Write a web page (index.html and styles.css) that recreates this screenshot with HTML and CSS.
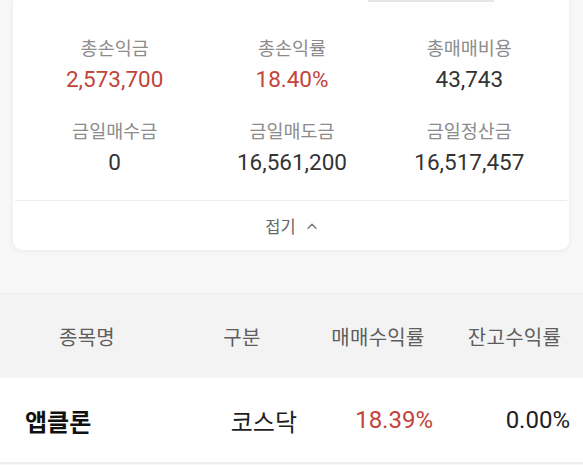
FILE: index.html
```html
<!DOCTYPE html>
<html lang="ko">
<head>
<meta charset="utf-8">
<link rel="stylesheet" href="styles.css">
</head>
<body>
<div class="wrap">
  <div class="card">
    <div class="tabline"></div>
    <div class="stats">
      <div class="stat"><span class="label">총손익금</span><span class="value red">2,573,700</span></div>
      <div class="stat"><span class="label">총손익률</span><span class="value red">18.40%</span></div>
      <div class="stat"><span class="label">총매매비용</span><span class="value">43,743</span></div>
      <div class="stat"><span class="label">금일매수금</span><span class="value">0</span></div>
      <div class="stat"><span class="label">금일매도금</span><span class="value">16,561,200</span></div>
      <div class="stat"><span class="label">금일정산금</span><span class="value">16,517,457</span></div>
    </div>
    <div class="fold">
      <span>접기</span>
      <svg class="caret" width="10" height="6" viewBox="0 0 10 6"><path d="M1 5.2 L5 1.2 L9 5.2" fill="none" stroke="#777" stroke-width="1.4" stroke-linecap="round" stroke-linejoin="round"/></svg>
    </div>
  </div>
</div>
<div class="table">
  <div class="thead">
    <div class="th">종목명</div>
    <div class="th">구분</div>
    <div class="th">매매수익률</div>
    <div class="th">잔고수익률</div>
  </div>
  <div class="trow">
    <div class="td name">앱클론</div>
    <div class="td">코스닥</div>
    <div class="td red">18.39%</div>
    <div class="td">0.00%</div>
  </div>
</div>
</body>
</html>
```
FILE: styles.css
```css
html, body {
  margin: 0;
  padding: 0;
}
body {
  background: #f8f8f8;
  font-family: Roboto, "Noto Sans CJK KR", sans-serif;
  width: 583px;
  overflow: hidden;
}
.wrap {
  padding: 0 14px 0 13px;
}
.card {
  background: #fff;
  border-radius: 0 0 9px 9px;
  box-shadow: 0 1px 6px rgba(0, 0, 0, 0.07);
}
.tabline {
  margin-left: 355px;
  width: 126px;
  height: 2px;
  background: #e6e6e6;
}
.stats {
  display: grid;
  grid-template-columns: repeat(3, 1fr);
  row-gap: 25px;
  padding: 34px 11px 23px 13px;
}
.stat {
  display: flex;
  flex-direction: column;
  align-items: center;
  gap: 4px;
}
.label {
  font-size: 18.5px;
  line-height: 26px;
  height: 24px;
  color: #8c8c8c;
}
.value {
  font-size: 22.5px;
  line-height: 30px;
  color: #333;
}
.red {
  color: #c2443b;
}
.fold {
  margin: 0 2px;
  border-top: 1px solid #ececec;
  height: 49px;
  display: flex;
  align-items: center;
  justify-content: center;
  gap: 11px;
  font-size: 16.5px;
  color: #666;
}
.table {
  margin-top: 43px;
}
.thead, .trow {
  display: grid;
  grid-template-columns: 174px 136px 136px 1fr;
  align-items: center;
}
.thead {
  height: 84px;
  background: #f3f3f3;
  border-top: 1px solid #efefef;
}
.th {
  text-align: center;
  font-size: 20px;
  letter-spacing: 0.3px;
  color: #5e5e5e;
}
.trow {
  height: 84px;
  background: #fff;
  border-bottom: 2px solid #eeeeee;
}
.td {
  text-align: right;
  padding-right: 13px;
  font-size: 24px;
  color: #1e1e1e;
}
.td.red {
  color: #c2443b;
}
.td.name {
  text-align: left;
  padding-left: 25px;
  font-weight: 700;
  color: #111;
}
```
